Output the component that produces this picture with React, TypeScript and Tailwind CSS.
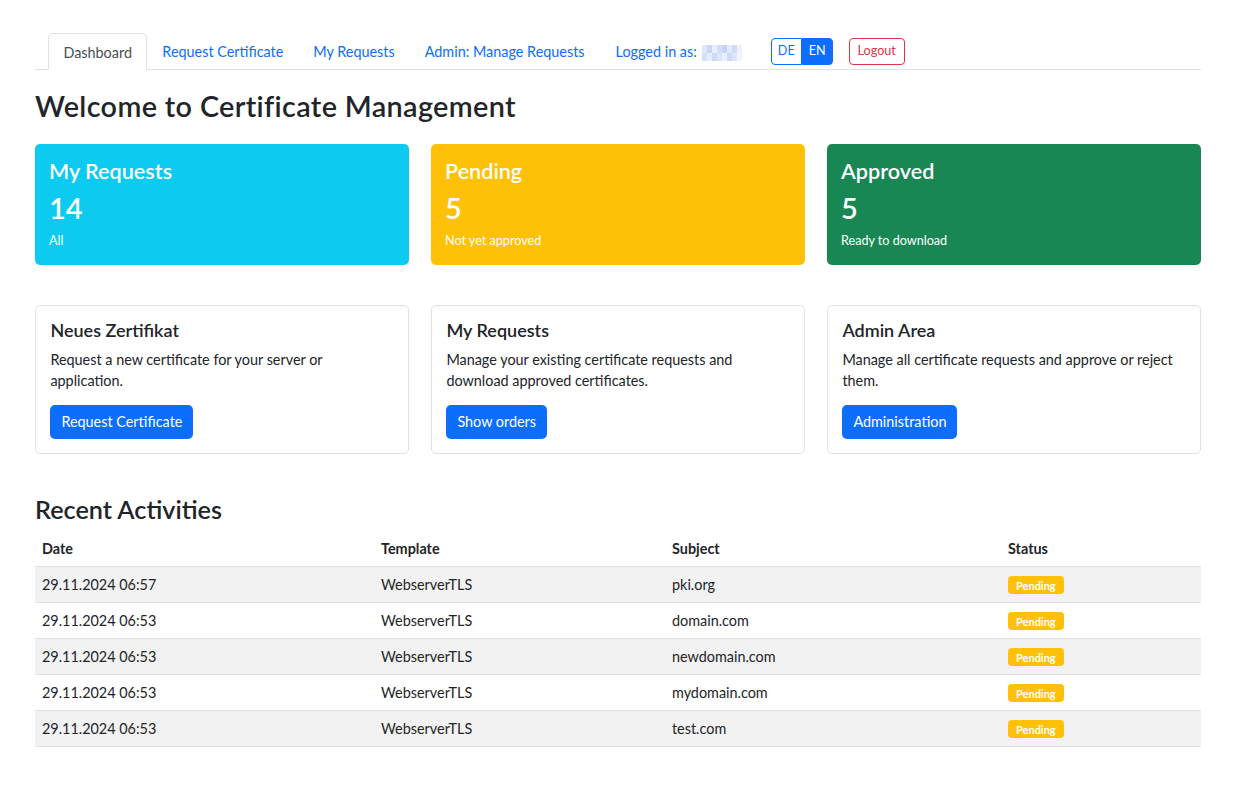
const rows = [
  { date: "29.11.2024 06:57", template: "WebserverTLS", subject: "pki.org" },
  { date: "29.11.2024 06:53", template: "WebserverTLS", subject: "domain.com" },
  { date: "29.11.2024 06:53", template: "WebserverTLS", subject: "newdomain.com" },
  { date: "29.11.2024 06:53", template: "WebserverTLS", subject: "mydomain.com" },
  { date: "29.11.2024 06:53", template: "WebserverTLS", subject: "test.com" },
];

const blur = [
  "bg-[#dfe7fb]", "bg-[#c9d7f8]", "bg-[#e8eefc]", "bg-[#d3def9]", "bg-[#c4d3f7]", "bg-[#e3eafb]", "bg-[#d0dcf9]", "bg-[#eef2fd]",
  "bg-[#d6e0fa]", "bg-[#e5ecfc]", "bg-[#cddaf8]", "bg-[#dbe4fa]", "bg-[#e9effc]", "bg-[#cfdbf8]", "bg-[#dde6fb]", "bg-[#f0f4fd]",
];

export default function App() {
  return (
    <div className="min-h-screen bg-white text-[#212529] text-[14.4px] leading-[1.5]" style={{ fontFamily: "Lato, 'Noto Sans', sans-serif" }}>
      <div className="ml-[35px] w-[1166px] pt-[33px]">
        {/* Navigation tabs */}
        <ul className="flex items-center border-b border-[#dee2e6] pl-[13px]">
          <li className="-mb-px">
            <span className="block h-[37px] px-[14.4px] pt-[8px] rounded-t-[5px] border border-[#dee2e6] border-b-white bg-white text-[#495057]">
              Dashboard
            </span>
          </li>
          <li className="h-[36px] pt-[8px] px-[15px] text-[#0d6efd]">Request Certificate</li>
          <li className="h-[36px] pt-[8px] px-[15px] text-[#0d6efd]">My Requests</li>
          <li className="h-[36px] pt-[8px] px-[15px] text-[#0d6efd]">Admin: Manage Requests</li>
          <li className="h-[36px] pt-[8px] flex pl-[16px] pr-[15px] text-[#0d6efd]">
            Logged in as:
            <span className="ml-[5px] mt-[4px] grid grid-cols-8 w-[40px] h-[16px]">
              {blur.map((c, i) => (
                <span key={i} className={c} />
              ))}
            </span>
          </li>
          <li className="ml-[14px] flex">
            <span className="h-[27px] px-[6px] flex items-center text-[12.6px] text-[#0d6efd] border border-[#0d6efd] rounded-l-[4px]">DE</span>
            <span className="h-[27px] px-[6px] flex items-center text-[12.6px] text-white bg-[#0d6efd] border border-[#0d6efd] rounded-r-[4px]">EN</span>
          </li>
          <li className="ml-[16px]">
            <span className="h-[27px] px-[8px] flex items-center text-[12.6px] text-[#dc3545] border border-[#dc3545] rounded-[4px]">Logout</span>
          </li>
        </ul>

        <h2 className="mt-[19px] mb-[20px] text-[28.8px] leading-[1.2] font-semibold tracking-[0.35px]">Welcome to Certificate Management</h2>

        {/* Stat cards */}
        <div className="grid grid-cols-3 gap-[22px]">
          <StatCard color="bg-[#0dcaf0]" title="My Requests" value="14" note="All" />
          <StatCard color="bg-[#ffc107]" title="Pending" value="5" note="Not yet approved" />
          <StatCard color="bg-[#198754]" title="Approved" value="5" note="Ready to download" />
        </div>

        {/* Action cards */}
        <div className="mt-[40px] grid grid-cols-3 gap-[22px]">
          <ActionCard title="Neues Zertifikat" text="Request a new certificate for your server or application." button="Request Certificate" />
          <ActionCard title="My Requests" text="Manage your existing certificate requests and download approved certificates." button="Show orders" />
          <ActionCard title="Admin Area" text="Manage all certificate requests and approve or reject them." button="Administration" />
        </div>

        <h3 className="mt-[40px] mb-[7px] text-[25.2px] leading-[1.2] font-semibold">Recent Activities</h3>

        <table className="w-full table-fixed border-collapse">
          <colgroup>
            <col className="w-[339px]" />
            <col className="w-[291px]" />
            <col className="w-[336px]" />
            <col />
          </colgroup>
          <thead>
            <tr className="border-b border-[#dee2e6]">
              <th className="h-[36px] px-[7px] text-left font-bold">Date</th>
              <th className="h-[36px] px-[7px] text-left font-bold">Template</th>
              <th className="h-[36px] px-[7px] text-left font-bold">Subject</th>
              <th className="h-[36px] px-[7px] text-left font-bold">Status</th>
            </tr>
          </thead>
          <tbody>
            {rows.map((r, i) => (
              <tr key={i} className={`border-b border-[#dee2e6] ${i % 2 === 0 ? "bg-[#f2f2f2]" : "bg-white"}`}>
                <td className="h-[36px] px-[7px]">{r.date}</td>
                <td className="h-[36px] px-[7px]">{r.template}</td>
                <td className="h-[36px] px-[7px]">{r.subject}</td>
                <td className="h-[36px] px-[7px]">
                  <span className="inline-flex items-center h-[18px] px-[8px] rounded-[4px] bg-[#ffc107] text-white text-[11px] font-bold leading-none">
                    Pending
                  </span>
                </td>
              </tr>
            ))}
          </tbody>
        </table>
      </div>
    </div>
  );
}

function StatCard({ color, title, value, note }: { color: string; title: string; value: string; note: string }) {
  return (
    <div className={`${color} h-[121px] rounded-[5px] px-[14px] pt-[15px] text-white`}>
      <div className="text-[21.6px] leading-[1.2] font-semibold">{title}</div>
      <div className="mt-[7px] text-[29px] leading-[1.2] font-semibold">{value}</div>
      <div className="mt-[6px] text-[12.6px] leading-[1.5]">{note}</div>
    </div>
  );
}

function ActionCard({ title, text, button }: { title: string; text: string; button: string }) {
  return (
    <div className="h-[149px] rounded-[5px] border border-[#dee2e6] p-[14.4px]">
      <div className="text-[18px] leading-[1.2] font-semibold">{title}</div>
      <p className="mt-[7px] leading-[1.5]">{text}</p>
      <button className="mt-[13px] h-[34px] px-[11px] rounded-[5px] bg-[#0d6efd] text-white">{button}</button>
    </div>
  );
}
